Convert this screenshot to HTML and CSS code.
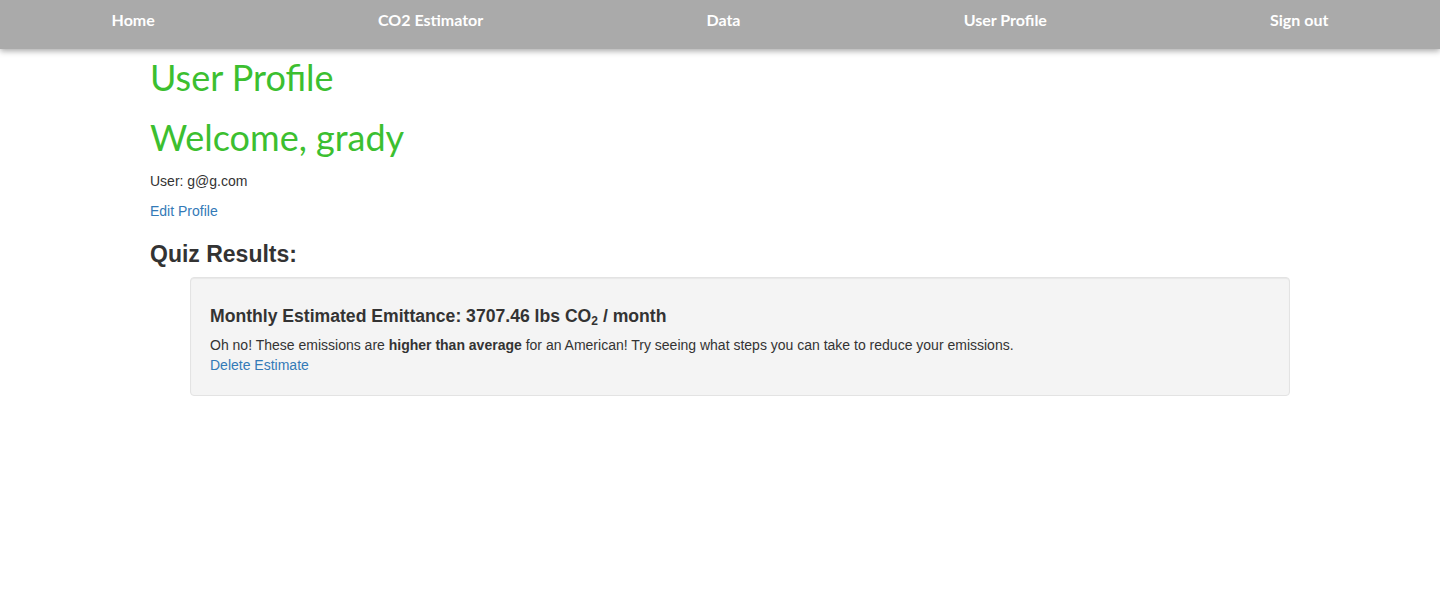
FILE: index.html
```html
<!DOCTYPE html>
<html>
<head>
<meta charset="utf-8">
<link rel="stylesheet" href="styles.css">
</head>
<body>
<nav class="navbar">
  <a href="#">Home</a>
  <a href="#">CO2 Estimator</a>
  <a href="#">Data</a>
  <a href="#">User Profile</a>
  <a href="#">Sign out</a>
</nav>
<main class="container">
  <h1 class="title">User Profile</h1>
  <h1 class="title welcome">Welcome, grady</h1>
  <p class="user">User: g@g.com</p>
  <p class="edit"><a href="#">Edit Profile</a></p>
  <h3 class="quiz">Quiz Results:</h3>
  <div class="well">
    <h4 class="estimate">Monthly Estimated Emittance: 3707.46 lbs CO<sub>2</sub> / month</h4>
    <p class="msg">Oh no! These emissions are <b>higher than average</b> for an American! Try seeing what steps you can take to reduce your emissions.</p>
    <a href="#" class="delete">Delete Estimate</a>
  </div>
</main>
</body>
</html>
```
FILE: styles.css
```css
html, body {
  margin: 0;
  padding: 0;
  background: #fff;
}
body {
  font-family: "Liberation Sans", Arial, sans-serif;
  font-size: 14px;
  line-height: 1.42857;
  color: #333;
}
a {
  color: #337ab7;
  text-decoration: none;
}
.navbar {
  height: 49px;
  background: #aaaaaa;
  box-shadow: 0 2px 6px rgba(0, 0, 0, 0.35);
  display: flex;
  justify-content: space-around;
  align-items: flex-start;
  position: relative;
}
.navbar a {
  color: #fff;
  font-family: "Lato", sans-serif;
  font-weight: 700;
  font-size: 16px;
  line-height: 20px;
  padding-top: 10px;
}
.container {
  width: 1140px;
  margin: 0 auto;
  padding: 0 15px;
}
.title {
  font-family: "Lato", sans-serif;
  font-weight: 400;
  color: #3cbf30;
  font-size: 36px;
  line-height: 40px;
  margin: 8px 0 0;
}
.welcome {
  margin-top: 20px;
}
.user {
  margin: 15px 0 0;
}
.edit {
  margin: 10px 0 0;
}
.quiz {
  font-size: 23px;
  font-weight: 700;
  line-height: 26px;
  margin: 19px 0 0;
  color: #333;
}
.well {
  margin: 10px 0 0 40px;
  background: #f4f4f4;
  border: 1px solid #e3e3e3;
  border-radius: 4px;
  padding: 19px;
  box-shadow: inset 0 1px 1px rgba(0, 0, 0, 0.05);
}
.estimate {
  font-size: 17.6px;
  font-weight: 700;
  line-height: 20px;
  margin: 9px 0 10px;
  color: #333;
}
.estimate sub {
  font-size: 12px;
  line-height: 0;
  vertical-align: -3px;
}
.msg {
  margin: 0;
}
.delete {
  display: inline-block;
}
```
